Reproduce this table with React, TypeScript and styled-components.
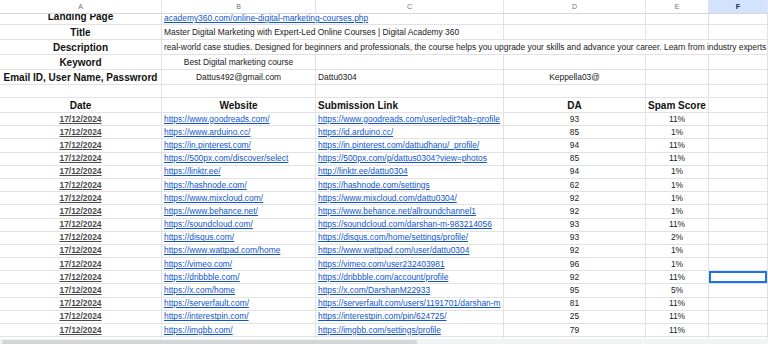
import styled, { createGlobalStyle } from "styled-components";

const GlobalStyle = createGlobalStyle`
  html, body {
    margin: 0;
    padding: 0;
    background: #fff;
  }
  * {
    box-sizing: border-box;
  }
`;

const COLS = "162px 154px 188px 142px 63px 59px";

interface DataRow {
  site: string;
  link: string;
  da: number;
  spam: string;
}

const rows: DataRow[] = [
  { site: "https://www.goodreads.com/", link: "https://www.goodreads.com/user/edit?tab=profile", da: 93, spam: "11%" },
  { site: "https://www.arduino.cc/", link: "https://id.arduino.cc/", da: 85, spam: "1%" },
  { site: "https://in.pinterest.com/", link: "https://in.pinterest.com/dattudhanu/_profile/", da: 94, spam: "11%" },
  { site: "https://500px.com/discover/select", link: "https://500px.com/p/dattus0304?view=photos", da: 85, spam: "11%" },
  { site: "https://linktr.ee/", link: "http://linktr.ee/dattu0304", da: 94, spam: "1%" },
  { site: "https://hashnode.com/", link: "https://hashnode.com/settings", da: 62, spam: "1%" },
  { site: "https://www.mixcloud.com/", link: "https://www.mixcloud.com/dattu0304/", da: 92, spam: "1%" },
  { site: "https://www.behance.net/", link: "https://www.behance.net/allroundchannel1", da: 92, spam: "1%" },
  { site: "https://soundcloud.com/", link: "https://soundcloud.com/darshan-m-983214056", da: 93, spam: "11%" },
  { site: "https://disqus.com/", link: "https://disqus.com/home/settings/profile/", da: 93, spam: "2%" },
  { site: "https://www.wattpad.com/home", link: "https://www.wattpad.com/user/dattu0304", da: 92, spam: "1%" },
  { site: "https://vimeo.com/", link: "https://vimeo.com/user232403981", da: 96, spam: "1%" },
  { site: "https://dribbble.com/", link: "https://dribbble.com/account/profile", da: 92, spam: "11%" },
  { site: "https://x.com/home", link: "https://x.com/DarshanM22933", da: 95, spam: "5%" },
  { site: "https://serverfault.com/", link: "https://serverfault.com/users/1191701/darshan-m", da: 81, spam: "11%" },
  { site: "https://interestpin.com/", link: "https://interestpin.com/pin/624725/", da: 25, spam: "11%" },
  { site: "https://imgbb.com/", link: "https://imgbb.com/settings/profile", da: 79, spam: "11%" },
];

const App = () => {
  return (
    <>
      <GlobalStyle />
      <Sheet>
        <ColHeaderRow>
          {["A", "B", "C", "D", "E", "F"].map((c) => (
            <ColHeader key={c} $active={c === "F"}>{c}</ColHeader>
          ))}
        </ColHeaderRow>

        <Body>
          <Row $h={11} $clip>
            <Cell $align="center"><Label>Landing Page</Label></Cell>
            <Cell $span={2}><Link>academy360.com/online-digital-marketing-courses.php</Link></Cell>
            <Cell />
            <Cell />
            <Cell />
          </Row>
          <Row $h={15}>
            <Cell $align="center"><Label>Title</Label></Cell>
            <Cell $span={2}><Plain>Master Digital Marketing with Expert-Led Online Courses | Digital Academy 360</Plain></Cell>
            <Cell />
            <Cell />
            <Cell />
          </Row>
          <Row $h={15}>
            <Cell $align="center"><Label>Description</Label></Cell>
            <Cell $span={5}>
              <Plain>real-world case studies. Designed for beginners and professionals, the course helps you upgrade your skills and advance your career. Learn from industry experts,</Plain>
            </Cell>
          </Row>
          <Row $h={15}>
            <Cell $align="center"><Label>Keyword</Label></Cell>
            <Cell $align="center"><Plain>Best Digital marketing course</Plain></Cell>
            <Cell />
            <Cell />
            <Cell />
            <Cell />
          </Row>
          <Row $h={15}>
            <Cell $align="center"><Label>Email ID, User Name, Passwrord</Label></Cell>
            <Cell $align="center"><Plain>Dattus492@gmail.com</Plain></Cell>
            <Cell><Plain>Dattu0304</Plain></Cell>
            <Cell $align="center"><Plain>Keppella03@</Plain></Cell>
            <Cell />
            <Cell />
          </Row>
          <Row $h={13}>
            <Cell /><Cell /><Cell /><Cell /><Cell /><Cell />
          </Row>
          <Row $h={15}>
            <Cell $align="center"><Label>Date</Label></Cell>
            <Cell $align="center"><Label>Website</Label></Cell>
            <Cell><Label>Submission Link</Label></Cell>
            <Cell $align="center"><Label>DA</Label></Cell>
            <Cell $align="center"><Label>Spam Score</Label></Cell>
            <Cell />
          </Row>
          {rows.map((r, i) => (
            <Row key={r.site} $h={13.2}>
              <Cell $align="center"><DateText>17/12/2024</DateText></Cell>
              <Cell><Link>{r.site}</Link></Cell>
              <Cell><Link>{r.link}</Link></Cell>
              <Cell $align="center"><Plain>{r.da}</Plain></Cell>
              <Cell $align="center"><Plain>{r.spam}</Plain></Cell>
              <Cell $selected={i === 12} />
            </Row>
          ))}
          <Row $h={13.2}>
            <Cell /><Cell /><Cell /><Cell /><Cell /><Cell />
          </Row>
        </Body>

        <Scrollbar>
          <Thumb />
        </Scrollbar>
      </Sheet>
    </>
  );
};

export default App;

const Sheet = styled.div`
  display: flex;
  flex-direction: column;
  width: 768px;
  height: 344px;
  overflow: hidden;
  background: #fff;
  font-family: "Liberation Sans", Arial, sans-serif;
`;

const ColHeaderRow = styled.div`
  display: grid;
  grid-template-columns: ${COLS};
  height: 14px;
  flex-shrink: 0;
  border-bottom: 1px solid #d5d7da;
`;

const ColHeader = styled.div<{ $active?: boolean }>`
  display: flex;
  align-items: center;
  justify-content: center;
  border-right: 1px solid #e3e3e3;
  background: ${(p) => (p.$active ? "#d3e3fd" : "#fff")};
  color: ${(p) => (p.$active ? "#0b2a5a" : "#6d6f72")};
  font-size: 7px;
  font-weight: ${(p) => (p.$active ? 700 : 400)};
`;

const Body = styled.div`
  flex: 1;
  overflow: hidden;
`;

const Row = styled.div<{ $h: number; $clip?: boolean }>`
  display: grid;
  grid-template-columns: ${COLS};
  height: ${(p) => p.$h}px;
  align-items: stretch;
  overflow: hidden;

  & > div {
    align-items: ${(p) => (p.$clip ? "flex-end" : "center")};
  }
`;

const Cell = styled.div<{ $align?: "left" | "center"; $span?: number; $selected?: boolean }>`
  display: flex;
  justify-content: ${(p) => (p.$align === "center" ? "center" : "flex-start")};
  grid-column: span ${(p) => p.$span ?? 1};
  min-width: 0;
  padding: 0 2px;
  overflow: hidden;
  white-space: nowrap;
  border-right: 1px solid #e2e2e2;
  border-bottom: 1px solid #e2e2e2;
  box-shadow: ${(p) => (p.$selected ? "inset 0 0 0 2px #1a73e8" : "none")};
`;

const Label = styled.span`
  color: #111;
  font-size: 10px;
  font-weight: 700;
  line-height: 15px;
`;

const Plain = styled.span`
  color: #222;
  font-size: 8.42px;
  line-height: 11px;
`;

const Link = styled.span`
  color: #1155cc;
  font-size: 8.42px;
  line-height: 11px;
  text-decoration: underline;
`;

const DateText = styled.span`
  color: #4a4a4a;
  font-size: 8.42px;
  font-weight: 700;
  line-height: 11px;
  text-decoration: underline;
`;

const Scrollbar = styled.div`
  display: flex;
  align-items: stretch;
  height: 5px;
  flex-shrink: 0;
  padding: 1px 0 0 2px;
  background: #f1f3f4;
`;

const Thumb = styled.div`
  width: 415px;
  background: #d4d6d9;
  border-radius: 2px 2px 0 0;
`;
